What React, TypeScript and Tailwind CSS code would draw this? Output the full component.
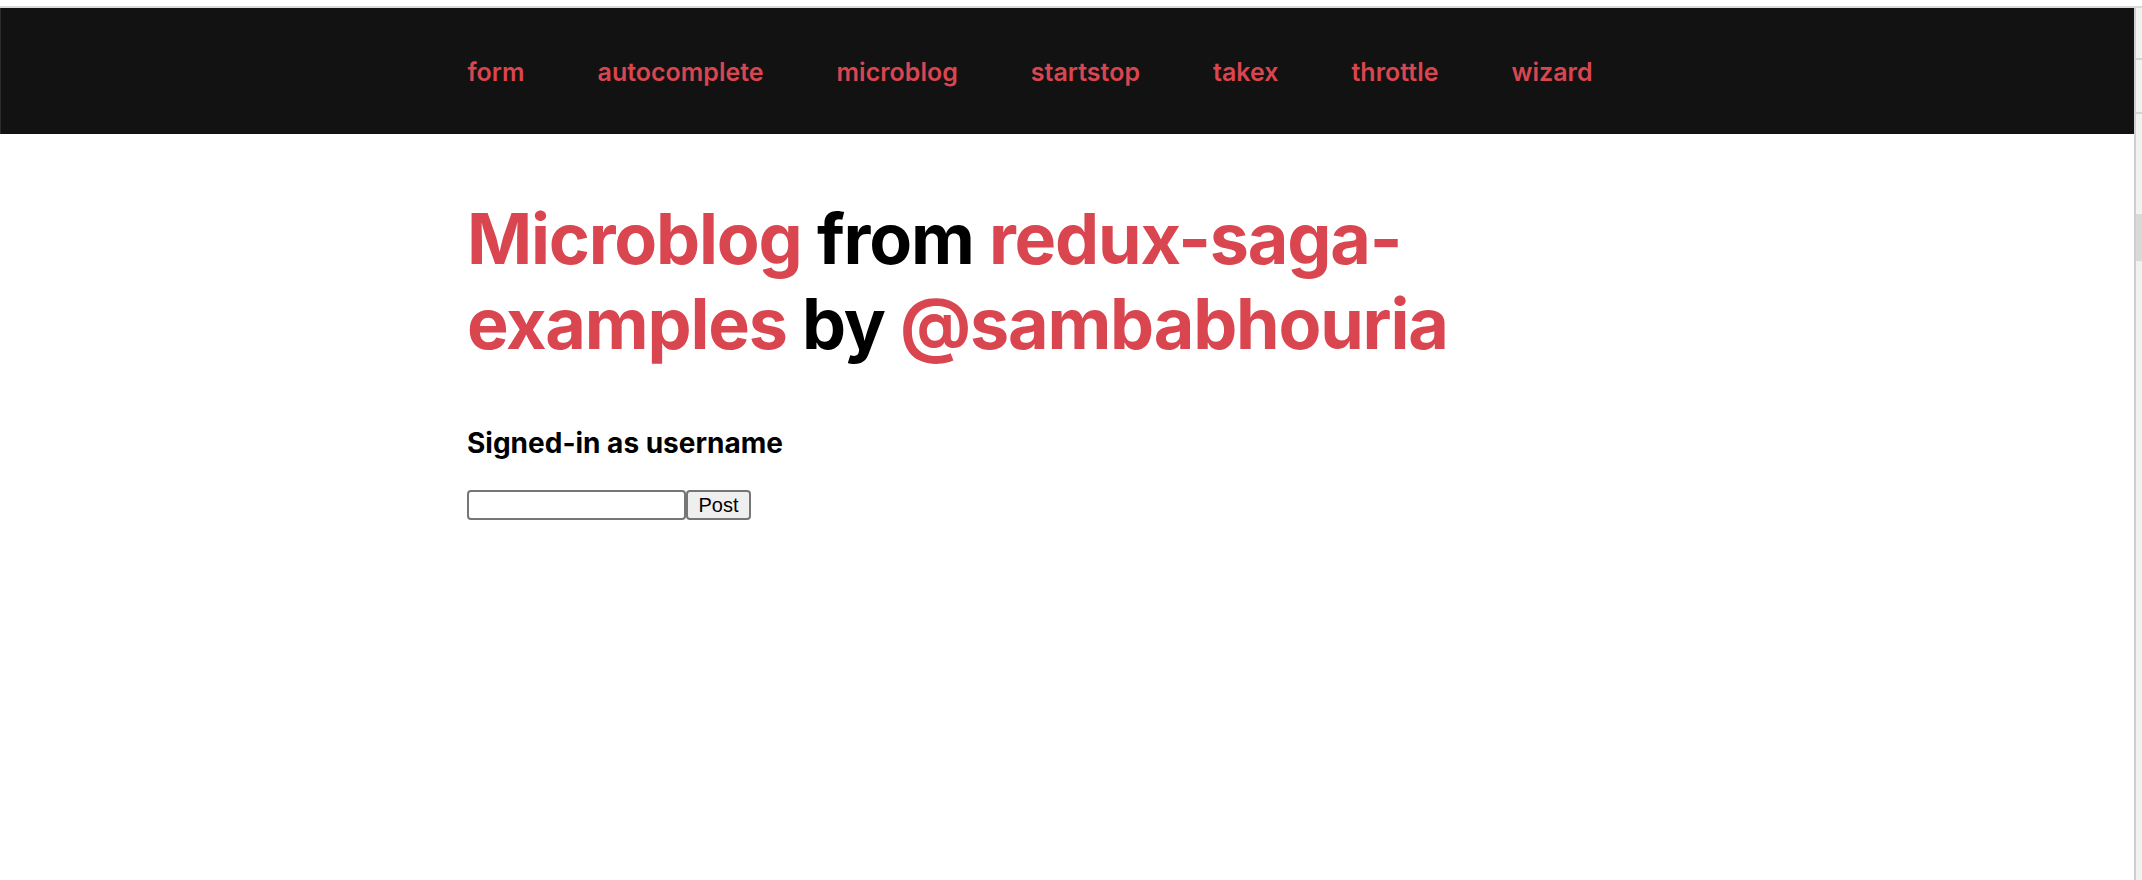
const navItems = ['form', 'autocomplete', 'microblog', 'startstop', 'takex', 'throttle', 'wizard']

function TopNav() {
  return (
    <nav className="h-[126px] border-l border-[#2c2c2c] bg-[#121212]">
      <div className="mx-auto flex h-full max-w-[1200px] items-center gap-[73px] pt-[1px]">
        {navItems.map((item) => (
          <a
            key={item}
            href="#"
            className="text-[25px] font-semibold leading-[30px] text-[#d9464f]"
          >
            {item}
          </a>
        ))}
      </div>
    </nav>
  )
}

function Scrollbar() {
  return (
    <div className="flex w-[8px] flex-col border-l-2 border-[#cfcfcf] bg-[#f1f1f1]">
      <div className="h-[52px] border-b-2 border-[#d4d4d4]" />
      <div className="h-[54px] border-b-2 border-[#d4d4d4]" />
      <div className="h-[100px]" />
      <div className="h-[47px] bg-[#d9d9d9]" />
    </div>
  )
}

export default function App() {
  return (
    <div
      className="flex h-[880px] flex-col bg-white text-black"
      style={{ fontFamily: 'Inter, "Noto Sans", sans-serif' }}
    >
      <div className="h-[6px] bg-white" />
      <div className="h-[2px] bg-[#d9d9d9]" />
      <div className="flex flex-1">
        <div className="flex-1">
          <TopNav />
          <main className="mx-auto max-w-[1200px]">
            <h1 className="mt-[62px] text-[70px] font-bold leading-[85px] tracking-[-1.2px]">
              <a href="#" className="text-[#d9464f]">Microblog</a> from{' '}
              <a href="#" className="text-[#d9464f]">redux-saga-examples</a> by{' '}
              <a href="#" className="text-[#d9464f]">@sambabhouria</a>
            </h1>

            <h2 className="mt-[61px] text-[28px] font-bold leading-[33px]">
              Signed-in as username
            </h2>

            <form className="mt-[30px] flex" onSubmit={(e) => e.preventDefault()}>
              <input
                type="text"
                className="h-[30px] w-[219px] rounded-[4px] border-2 border-[#767676] bg-white px-1 text-[20px]"
              />
              <button
                type="submit"
                className="h-[30px] w-[65px] rounded-[4px] border-2 border-[#767676] bg-[#efefef] text-[20px] leading-none text-black"
                style={{ fontFamily: '"Liberation Sans", Arial, sans-serif' }}
              >
                Post
              </button>
            </form>
          </main>
        </div>
        <Scrollbar />
      </div>
    </div>
  )
}
